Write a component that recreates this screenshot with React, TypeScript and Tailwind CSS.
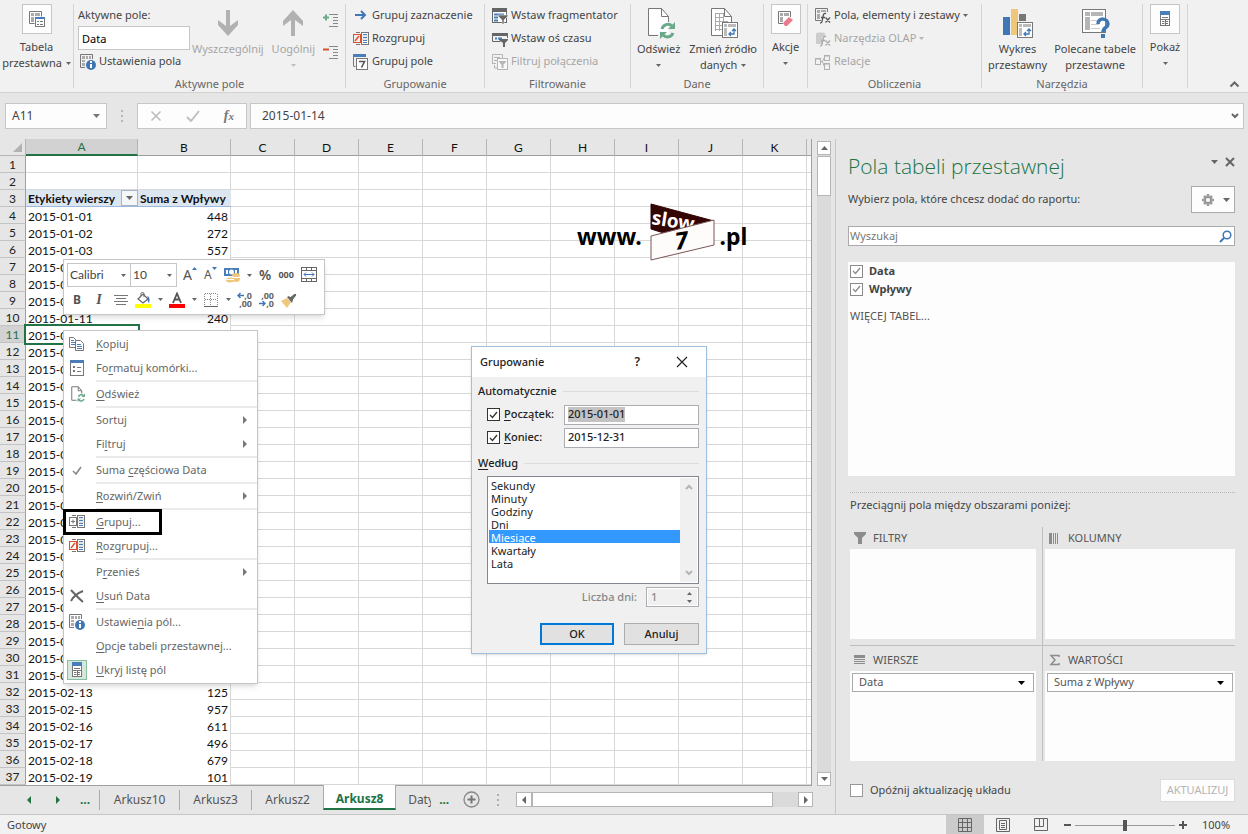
import type { ReactNode } from 'react';
import clsx from 'clsx';

const COLUMNS = ['A', 'B', 'C', 'D', 'E', 'F', 'G', 'H', 'I', 'J', 'K'];

const COL_WIDTHS: Record<string, string> = {
  A: 'w-[112px]',
  B: 'w-[93px]',
};

type PivotRow = { date: string; sum: number };

const PIVOT_ROWS: PivotRow[] = [
  { date: '2015-01-01', sum: 448 },
  { date: '2015-01-02', sum: 272 },
  { date: '2015-01-03', sum: 557 },
  { date: '2015-01-06', sum: 318 },
  { date: '2015-01-08', sum: 764 },
  { date: '2015-01-09', sum: 125 },
  { date: '2015-01-11', sum: 240 },
  { date: '2015-01-14', sum: 633 },
  { date: '2015-01-15', sum: 402 },
  { date: '2015-01-16', sum: 871 },
  { date: '2015-01-17', sum: 190 },
  { date: '2015-01-19', sum: 546 },
  { date: '2015-01-20', sum: 722 },
  { date: '2015-01-21', sum: 305 },
  { date: '2015-01-23', sum: 918 },
  { date: '2015-01-24', sum: 467 },
  { date: '2015-01-25', sum: 283 },
  { date: '2015-01-26', sum: 651 },
  { date: '2015-01-28', sum: 154 },
  { date: '2015-01-29', sum: 839 },
  { date: '2015-01-30', sum: 376 },
  { date: '2015-01-31', sum: 592 },
  { date: '2015-02-02', sum: 211 },
  { date: '2015-02-04', sum: 748 },
  { date: '2015-02-05', sum: 430 },
  { date: '2015-02-07', sum: 967 },
  { date: '2015-02-09', sum: 519 },
  { date: '2015-02-11', sum: 284 },
  { date: '2015-02-13', sum: 125 },
  { date: '2015-02-15', sum: 957 },
  { date: '2015-02-16', sum: 611 },
  { date: '2015-02-17', sum: 496 },
  { date: '2015-02-18', sum: 679 },
  { date: '2015-02-19', sum: 101 },
];

const ACTIVE_ROW = 11;

/* ---------- small shared glyphs ---------- */

function Caret({ className = 'text-[#666]' }: { className?: string }) {
  return (
    <svg viewBox="0 0 7 4" className={clsx('h-1 w-[7px] shrink-0', className)}>
      <path d="M0 0h7L3.500 4z" fill="currentColor" />
    </svg>
  );
}

function SmallCaret({ className = 'text-[#666]' }: { className?: string }) {
  return (
    <svg viewBox="0 0 5 3" className={clsx('h-[3px] w-[5px] shrink-0', className)}>
      <path d="M0 0h5L2.500 3z" fill="currentColor" />
    </svg>
  );
}

function Icon({ size = 16, children }: { size?: number; children: ReactNode }) {
  return (
    <svg width={size} height={size} viewBox={`0 0 ${size} ${size}`} fill="none" className="shrink-0">
      {children}
    </svg>
  );
}

function PivotIcon() {
  return (
    <Icon>
      <path d="M.5.5h12v5M.5.5v12h5" stroke="#777" />
      <path d="M2 2h3v3H2zM6 2h5v3H6zM2 6h3v5H2z" fill="#aaa" />
      <rect x="6.500" y="6.500" width="9" height="9" fill="#fff" stroke="#777" />
      <path d="M6 6h10v2H6z" fill="#4a7ebb" />
      <path d="M8 10.500h2M11 10.500h3M8 13.500h2M11 13.500h3" stroke="#777" />
    </Icon>
  );
}

function FieldSettingsIcon() {
  return (
    <Icon>
      <path d="M5 13.500H.5V.5h12V5" stroke="#777" />
      <path d="M2 2h3v3H2zM6 2h2v3H6zM9 2h2v3H9zM2 6h3v2H2zM2 9h3v3H2z" fill="#aaa" />
      <circle cx="11" cy="11" r="5" fill="#3f77b5" />
      <path d="M11 10v4" stroke="#fff" strokeWidth="2" />
      <path d="M10 7h2v2h-2z" fill="#fff" />
    </Icon>
  );
}

function GroupIcon({ crossed = false }: { crossed?: boolean }) {
  return (
    <Icon>
      <path d="M7 1.500H3M7 13.500H3" stroke="#777" />
      <rect x=".5" y="3.500" width="7" height="8" stroke={crossed ? '#d9512c' : '#777'} />
      {crossed ? (
        <path d="M2 10l4-5" stroke="#d9512c" strokeWidth="1.500" />
      ) : (
        <path d="M2 7.500h4M4 5.500v4" stroke="#777" />
      )}
      <rect x="8.500" y="1.500" width="7" height="12" fill="#fff" stroke="#777" />
      <path d="M10 3.500h4M10 6.500h4M10 9.500h4M10 11.500h4" stroke="#4a7ebb" />
      <path d="M9 5h6M9 8h6" stroke="#aaa" strokeWidth=".6" />
    </Icon>
  );
}

function CalendarIcon() {
  return (
    <Icon>
      <path d="M.5 12V1M.5 12.500h2" stroke="#777" />
      <path d="M0 0h13v3H0z" fill="#4a7ebb" />
      <rect x="3.500" y="4.500" width="11" height="11" fill="#fff" stroke="#777" />
      <path d="M6 7.500h5.500L8.500 13.500" stroke="#555" strokeWidth="1.600" />
    </Icon>
  );
}

function SlicerIcon() {
  return (
    <Icon>
      <rect x=".5" y=".5" width="14" height="14" fill="#fff" stroke="#666" />
      <path d="M0 0h15v4H0z" fill="#666" />
      <path d="M2 6.500h10M2 9.500h4M2 12.500h4" stroke="#4a7ebb" strokeWidth="2" />
      <path d="M6 7h10v1l-4 4v4h-2v-4L6 8z" fill="#666" stroke="#f1f1f1" strokeWidth=".6" />
    </Icon>
  );
}

function TimelineIcon() {
  return (
    <Icon>
      <path d="M.5 2v8.500h8M15.500 2v5" stroke="#666" />
      <path d="M0 2h16v3H0z" fill="#666" />
      <path d="M3 7.500h2M6 7.500h4" stroke="#4a7ebb" strokeWidth="2" />
      <path d="M7 8h9v1l-3 3v4h-2v-4L7 9z" fill="#666" />
    </Icon>
  );
}

function FilterConnectionsIcon() {
  return (
    <Icon>
      <path d="M.5 10V.5h10V4M2 3.500h6M2 6.500h3M.5 9.500H4M2.500 11v3H5" stroke="#b5b5b5" />
      <rect x="5.500" y="4.500" width="10" height="11" fill="#f8f8f8" stroke="#b5b5b5" />
      <path d="M7 7h7v1l-2.500 2.500V14h-2v-3.500L7 8z" fill="#b5b5b5" />
    </Icon>
  );
}

function RefreshPageIcon({ size = 32 }: { size?: number }) {
  return (
    <svg width={size} height={size} viewBox="0 0 32 32" fill="none" className="shrink-0">
      <path d="M5.500 1.500h12l8 8v18h-20z" fill="#fff" />
      <path d="M15 28.500H5.500v-27h13l7 8V15M18.500 1.500v8h7" stroke="#777" strokeWidth={size < 20 ? 2 : 1} />
      <path d="M19 22a6 6 0 0 1 10-3M30 26a6 6 0 0 1-10 2" stroke="#6aaa8b" strokeWidth="3" />
      <path d="M32 15v7h-7zM17 32v-7h7z" fill="#6aaa8b" />
    </svg>
  );
}

function ChangeSourceIcon() {
  return (
    <Icon size={32}>
      <path d="M4.500 1.500h13l7 8V28h-20z" fill="#fff" />
      <path d="M16 28.500H4.500v-27h13l7 8V15M17.500 1.500v8h7" stroke="#777" />
      <path d="M8 6.500h9M8 10.500h9M8 14.500h13M8 18.500h8M8 22.500h8M8.500 6v18M12.500 6v18M16.500 6v9" stroke="#aaa" />
      <rect x="15.500" y="15.500" width="15" height="15" fill="#fff" stroke="#777" />
      <path d="M17 17h3v3h-3zM21 17h8v3h-8zM17 21h3v8h-3z" fill="#bbb" />
      <path d="M22 27h5v-5M24 25l-2 2 2 2M25 24l2-2 2 2" stroke="#3f77b5" strokeWidth="1.300" />
    </Icon>
  );
}

function ClearIcon() {
  return (
    <Icon>
      <path d="M5 12.500H.5V.5h12V6" stroke="#777" />
      <path d="M2 2h3v3H2zM6 2h5v3H6zM2 6h3v5H2z" fill="#aaa" />
      <path d="M5 12l6-6 4 3-6 6H7z" fill="#ea7b8c" />
    </Icon>
  );
}

function FieldsItemsIcon() {
  return (
    <Icon>
      <path d="M6 12.500H.5V.5h12V4" stroke="#777" />
      <path d="M2 2h3v3H2zM6 2h5v2H6zM2 6h3v5H2z" fill="#aaa" />
      <path d="M5 15c2 0 2-1 2.500-4l.6-3c.4-2 1.200-3 3-2.500M6 9.500h4M10.500 9.500l4.500 5M15 9.500l-4.500 5" stroke="#555" strokeWidth="1.300" />
    </Icon>
  );
}

function OlapIcon() {
  return (
    <Icon>
      <path d="M1 2.500C1 1 10 1 10 2.500V6H7v7H1z" fill="#ccc" />
      <path d="M5 15c2 0 2-1 2.500-4l.6-3c.4-2 1.200-3 3-2.500M6 9.500h4M10.500 9.500l4.500 5M15 9.500l-4.500 5" stroke="#aaa" strokeWidth="1.300" />
    </Icon>
  );
}

function RelationsIcon() {
  return (
    <Icon>
      <rect x=".5" y="4.500" width="5" height="6" stroke="#b0b0b0" />
      <rect x="9.500" y="1.500" width="5" height="5" stroke="#b0b0b0" />
      <rect x="9.500" y="9.500" width="5" height="6" stroke="#b0b0b0" />
      <path d="M6 7.500h1.500L9 4M7.500 7.500L9 12M1 5h5M10 2h5M10 10h5" stroke="#b0b0b0" />
    </Icon>
  );
}

function PivotChartIcon() {
  return (
    <Icon size={32}>
      <path d="M1 10h7v18H1z" fill="#3f77b5" />
      <path d="M9 2h7v26H9z" fill="#efc77b" />
      <path d="M17 7h7v7h-7z" fill="#777" />
      <rect x="15.500" y="15.500" width="15" height="15" fill="#fff" stroke="#777" />
      <path d="M17 17h3v3h-3zM21 17h8v3h-8zM17 21h3v8h-3z" fill="#bbb" />
      <path d="M22 27h5v-5M24 25l-2 2 2 2M25 24l2-2 2 2" stroke="#3f77b5" strokeWidth="1.300" />
    </Icon>
  );
}

function RecommendedIcon() {
  return (
    <Icon size={32}>
      <rect x="3.500" y="2.500" width="23" height="23" fill="#fff" stroke="#777" />
      <path d="M6 5h5v4H6zM12 5h12v4H12zM6 10h5v13H6z" fill="#b5b5b5" />
      <path d="M12 13.500h10M12 17.500h8M12 21.500h9" stroke="#ccc" />
      <path d="M19 17c0-7 10-6 10 0 0 4-5 3-5 8" stroke="#3f77b5" strokeWidth="3.500" />
      <path d="M22 27h4v4h-4z" fill="#3f77b5" />
    </Icon>
  );
}

function FieldListIcon() {
  return (
    <Icon>
      <rect x="3.500" y=".5" width="9" height="14" fill="#fff" stroke="#777" />
      <path d="M3 0h10v4H3z" fill="#4a7ebb" />
      <path d="M5 6.500h6M4 8.500h8M5 10.500h2.500M9 10.500h2M5 12.500h2.500M9 12.500h2M8.500 8v6" stroke="#777" />
    </Icon>
  );
}

function BigArrow({ down = false }: { down?: boolean }) {
  return (
    <svg width="24" height="28" viewBox="0 0 24 28" className={down ? '' : 'rotate-180'}>
      <path d="M10 1h4v16l8-6v5L12 27 2 16v-5l8 6z" fill="#b1b1b1" />
    </svg>
  );
}

function ExpandIcon({ plus = false }: { plus?: boolean }) {
  return (
    <Icon>
      <path d="M6 2.500h9M10 5.500h5M10 8.500h5M10 11.500h5M6 14.500h9" stroke="#888" />
      {plus ? (
        <path d="M0 5.500h6M3 2.500v6" stroke="#6aaa8b" strokeWidth="2" />
      ) : (
        <path d="M0 5.500h6" stroke="#d9512c" strokeWidth="2" />
      )}
    </Icon>
  );
}

function ArrowRightIcon() {
  return (
    <Icon>
      <path d="M2 7h10M8 3l4 4-4 4" stroke="#3f77b5" strokeWidth="2" />
    </Icon>
  );
}

/* ---------- ribbon ---------- */

function RibbonGroup({ label, className, children }: { label?: string; className: string; children: ReactNode }) {
  return (
    <section className={clsx('flex flex-col border-r border-[#d5d5d5]', className)}>
      <div className="flex h-[69px]">{children}</div>
      <div className="mt-[3px] h-3 text-center leading-4 text-[#666]">{label}</div>
    </section>
  );
}

function SmallButton({ icon, label, caret, disabled }: { icon: ReactNode; label: string; caret?: boolean; disabled?: boolean }) {
  return (
    <button disabled={disabled} className="flex h-[23px] items-center gap-[3px] whitespace-nowrap disabled:text-[#a6a6a6]">
      {icon}
      {label}
      {caret && <SmallCaret className={disabled ? 'text-[#b5b5b5]' : 'text-[#666]'} />}
    </button>
  );
}

function BoxedButton({ icon, lines }: { icon: ReactNode; lines: string[] }) {
  const last = lines.length - 1;
  return (
    <button className="flex flex-1 flex-col items-center leading-4">
      <span className="mb-[5px] grid size-[30px] place-items-center border border-[#c6c6c6] bg-[#fdfdfd]">{icon}</span>
      {lines.map((line, i) => (
        <span key={i} className="flex h-4 items-center gap-1 whitespace-nowrap">
          {line}
          {i === last && <SmallCaret />}
        </span>
      ))}
    </button>
  );
}

function LargeButton({ icon, lines, caret, disabled }: { icon: ReactNode; lines: string[]; caret?: boolean; disabled?: boolean }) {
  const last = lines.length - 1;
  return (
    <button disabled={disabled} className="flex flex-col items-center leading-4 disabled:text-[#a6a6a6]">
      <span className="grid h-[37px] place-items-center">{icon}</span>
      {lines.map((line, i) => (
        <span key={i} className="flex h-4 items-center gap-1 whitespace-nowrap">
          {line}
          {caret && i === last && <SmallCaret className={disabled ? 'text-[#c0c0c0]' : 'text-[#666]'} />}
        </span>
      ))}
    </button>
  );
}

function Ribbon() {
  return (
    <header className="flex border-b border-[#d2d2d2] bg-[#f1f1f1] pt-1 pb-1 text-[#444]">
      <RibbonGroup className="w-[74px]">
        <BoxedButton icon={<PivotIcon />} lines={['Tabela', 'przestawna']} />
      </RibbonGroup>
      <RibbonGroup label="Aktywne pole" className="w-[272px]">
        <div className="ml-1 flex w-[112px] flex-col">
          <label htmlFor="active-field" className="flex h-[22px] items-center">Aktywne pole:</label>
          <input id="active-field" defaultValue="Data" className="h-6 w-full border border-[#c6c6c6] bg-white px-[3px] text-black outline-none" />
          <div className="pl-[2px]">
            <SmallButton icon={<FieldSettingsIcon />} label="Ustawienia pola" />
          </div>
        </div>
        <div className="flex flex-1 justify-between pr-[2px] pl-[2px]">
          <LargeButton icon={<BigArrow down />} lines={['Wyszczególnij']} disabled />
          <LargeButton icon={<BigArrow />} lines={['Uogólnij', '']} caret disabled />
          <div className="flex w-5 flex-col gap-4 pt-[8px]">
            <button aria-label="Rozwiń pole"><ExpandIcon plus /></button>
            <button aria-label="Zwiń pole"><ExpandIcon /></button>
          </div>
        </div>
      </RibbonGroup>
      <RibbonGroup label="Grupowanie" className="w-[139px]">
        <div className="pl-[7px]">
          <SmallButton icon={<ArrowRightIcon />} label="Grupuj zaznaczenie" />
          <SmallButton icon={<GroupIcon crossed />} label="Rozgrupuj" />
          <SmallButton icon={<CalendarIcon />} label="Grupuj pole" />
        </div>
      </RibbonGroup>
      <RibbonGroup label="Filtrowanie" className="w-[146px]">
        <div className="pl-[7px]">
          <SmallButton icon={<SlicerIcon />} label="Wstaw fragmentator" />
          <SmallButton icon={<TimelineIcon />} label="Wstaw oś czasu" />
          <SmallButton icon={<FilterConnectionsIcon />} label="Filtruj połączenia" disabled />
        </div>
      </RibbonGroup>
      <RibbonGroup label="Dane" className="w-[133px]">
        <div className="flex flex-1 justify-between pr-[6px] pl-[6px]">
          <LargeButton icon={<RefreshPageIcon />} lines={['Odśwież', '']} caret />
          <LargeButton icon={<ChangeSourceIcon />} lines={['Zmień źródło', 'danych']} caret />
        </div>
      </RibbonGroup>
      <RibbonGroup className="w-[44px]">
        <BoxedButton icon={<ClearIcon />} lines={['Akcje', '']} />
      </RibbonGroup>
      <RibbonGroup label="Obliczenia" className="w-[174px]">
        <div className="pl-[7px]">
          <SmallButton icon={<FieldsItemsIcon />} label="Pola, elementy i zestawy" caret />
          <SmallButton icon={<OlapIcon />} label="Narzędzia OLAP" caret disabled />
          <SmallButton icon={<RelationsIcon />} label="Relacje" disabled />
        </div>
      </RibbonGroup>
      <RibbonGroup label="Narzędzia" className="w-[161px]">
        <div className="flex flex-1 justify-between px-[6px]">
          <LargeButton icon={<PivotChartIcon />} lines={['Wykres', 'przestawny']} />
          <LargeButton icon={<RecommendedIcon />} lines={['Polecane tabele', 'przestawne']} />
        </div>
      </RibbonGroup>
      <RibbonGroup className="w-[45px]">
        <BoxedButton icon={<FieldListIcon />} lines={['Pokaż', '']} />
      </RibbonGroup>
      <button aria-label="Zwiń wstążkę" className="mr-2 ml-auto self-end">
        <svg width="11" height="7" viewBox="0 0 11 7" fill="none">
          <path d="M1.500 5.500l4-4 4 4" stroke="#666" strokeWidth="2" />
        </svg>
      </button>
    </header>
  );
}

function FormulaBar() {
  return (
    <div className="flex h-[46px] items-center bg-[#e6e6e6] pr-1 pl-[5px]">
      <div className="flex h-[26px] w-[102px] items-center border border-[#c6c6c6] bg-[#fdfdfd] pr-[6px]">
        <input aria-label="Pole nazwy" defaultValue="A11" className="w-0 flex-1 pl-[6px] text-xs text-[#444] outline-none" />
        <Caret className="text-[#777]" />
      </div>
      <div className="flex w-[30px] flex-col items-center gap-[3px]">
        {[0, 1, 2].map((i) => <i key={i} className="size-[2px] bg-[#b8b8b8]" />)}
      </div>
      <div className="mr-[3px] flex h-[26px] w-[110px] items-center justify-between border border-[#c6c6c6] bg-[#fdfdfd] px-3">
        <button aria-label="Anuluj wpis">
          <svg width="12" height="12" viewBox="0 0 12 12"><path d="M1.500 1.500l9 9M10.500 1.500l-9 9" stroke="#bbb" strokeWidth="1.500" /></svg>
        </button>
        <button aria-label="Zatwierdź wpis">
          <svg width="14" height="12" viewBox="0 0 14 12" fill="none"><path d="M1 7l4 4 8-10" stroke="#c0c0c0" strokeWidth="2" /></svg>
        </button>
        <button className="font-[Liberation_Serif,serif] text-sm font-bold text-[#777] italic">
          f<span className="text-[11px]">x</span>
        </button>
      </div>
      <div className="flex h-[26px] flex-1 items-center border border-[#c6c6c6] bg-[#fdfdfd] pr-1">
        <input aria-label="Pasek formuły" defaultValue="2015-01-14" className="flex-1 pl-[11px] text-xs text-[#444] outline-none" />
        <svg width="8" height="6" viewBox="0 0 8 6" fill="none"><path d="M1 1l3 3 3-3" stroke="#666" strokeWidth="2" /></svg>
      </div>
    </div>
  );
}

/* ---------- worksheet ---------- */

function RowHeader({ row }: { row: number }) {
  return (
    <th
      className={clsx(
        'border-r border-b border-r-[#9f9f9f] border-b-[#c3c3c3] p-0 pt-px text-center font-normal',
        row === ACTIVE_ROW ? 'bg-[#d2d2d2] text-[#217346]' : 'bg-[#e6e6e6] text-[#222]',
      )}
    >
      {row}
    </th>
  );
}

function EmptyCells({ from }: { from: number }) {
  return (
    <>
      {COLUMNS.slice(from).map((c) => (
        <td key={c} className="border-r border-b border-[#d8d8d8] p-0" />
      ))}
      <td className="border-b border-[#d8d8d8] p-0" />
    </>
  );
}

function Grid() {
  return (
    <table className="w-full table-fixed border-separate border-spacing-0 border-r border-b border-[#9f9f9f] bg-white font-[Lato,sans-serif] text-xs leading-[15px] text-[#111]">
      <colgroup>
        <col className="w-[26px]" />
        {COLUMNS.map((c) => <col key={c} className={COL_WIDTHS[c] ?? 'w-[64px]'} />)}
        <col />
      </colgroup>
      <thead>
        <tr className="h-[17px] bg-[#e6e6e6]">
          <th className="border-r border-b border-[#b5b5b5] p-0">
            <svg width="9" height="9" viewBox="0 0 9 9" className="mr-[3px] ml-auto"><path d="M9 0v9H0z" fill="#b2b2b2" /></svg>
          </th>
          {COLUMNS.map((c) => (
            <th
              key={c}
              className={clsx(
                'border-r border-r-[#b5b5b5] p-0 font-normal',
                c === 'A' ? 'border-b-2 border-b-[#217346] bg-[#d2d2d2] text-[#217346]' : 'border-b border-b-[#9f9f9f] pt-px',
              )}
            >
              {c}
            </th>
          ))}
          <th className="border-b border-[#9f9f9f] p-0" />
        </tr>
      </thead>
      <tbody>
        {[1, 2].map((row) => (
          <tr key={row} className="h-[17px]">
            <RowHeader row={row} />
            <EmptyCells from={0} />
          </tr>
        ))}
        <tr className="h-[17px]">
          <RowHeader row={3} />
          <td className="border-b border-[#9bb9dc] bg-[#dce6f1] p-0 font-bold">
            <div className="flex h-4 items-center justify-between pl-[2px] whitespace-nowrap">
              <span className="pt-px">Etykiety wierszy</span>
              <button aria-label="Filtruj etykiety" className="grid h-4 w-[17px] place-items-center border border-[#a9b4c2] bg-[#f4f6f9]">
                <Caret />
              </button>
            </div>
          </td>
          <td className="border-b border-[#9bb9dc] bg-[#dce6f1] p-0 pt-px pl-[2px] font-bold whitespace-nowrap">Suma z Wpływy</td>
          <EmptyCells from={2} />
        </tr>
        {PIVOT_ROWS.map((r, i) => {
          const row = i + 4;
          return (
            <tr key={r.date} className="h-[17px]">
              <RowHeader row={row} />
              <td className={clsx('p-0 pt-px pl-[2px]', row === ACTIVE_ROW && 'outline-2 outline-[#217346]')}>{r.date}</td>
              <td className="border-r border-[#d8d8d8] p-0 pt-px pr-[2px] text-right">{r.sum}</td>
              <EmptyCells from={2} />
            </tr>
          );
        })}
      </tbody>
    </table>
  );
}

function VerticalScrollbar() {
  return (
    <div className="mt-[2px] mr-1 ml-[5px] flex w-[14px] shrink-0 flex-col bg-[#dadada]">
      <button aria-label="W górę" className="grid h-[14px] place-items-center border border-[#b5b5b5] bg-white">
        <Caret className="rotate-180 text-[#666]" />
      </button>
      <div className="mt-px h-10 border border-[#b5b5b5] bg-white" />
      <button aria-label="W dół" className="mt-auto grid h-[14px] place-items-center border border-[#b5b5b5] bg-white">
        <Caret />
      </button>
    </div>
  );
}

function SiteLogo() {
  return (
    <div className="absolute top-[63px] left-[577px] flex items-center text-[23px] leading-none font-bold text-black">
      <span className="pt-[6px]">www.</span>
      <svg width="66" height="62" viewBox="0 0 66 62" className="mr-1 ml-2">
        <path d="M1 2l63 17-47 13L1 27z" fill="#330505" stroke="#330505" />
        <text x="1" y="22" transform="rotate(9 1 22)" fontSize="19" fill="#fff" className="font-bold">slow</text>
        <path d="M1 34l63-16v25L1 58z" fill="#fefbfb" stroke="#7a5555" />
        <text x="26" y="48" transform="rotate(-8 26 48)" fontSize="24" fill="#000" className="font-bold italic">7</text>
      </svg>
      <span className="pt-[6px]">.pl</span>
    </div>
  );
}

/* ---------- mini toolbar ---------- */

function BorderedSelect({ label, value, className }: { label: string; value: string; className: string }) {
  return (
    <div className={clsx('flex h-6 items-center border border-[#c6c6c6] bg-white pr-1', className)}>
      <select aria-label={label} className="w-0 flex-1 appearance-none pl-[2px] font-[Lato,sans-serif] text-xs text-[#444] outline-none">
        <option>{value}</option>
      </select>
      <SmallCaret />
    </div>
  );
}

function DecimalsButton({ label, top, bottom, arrow }: { label: string; top: string; bottom: string; arrow: 'left' | 'right' }) {
  return (
    <button aria-label={label}>
      <svg width="16" height="16" viewBox="0 0 16 16" fill="none" className="text-[9px] font-bold">
        <text x="15" y="7" textAnchor="end" fill="#666">{top}</text>
        <text x="15" y="15" textAnchor="end" fill="#666">{bottom}</text>
        {arrow === 'left' ? (
          <path d="M1 3.500h6M3.500 1L1 3.500 3.500 6" stroke="#3f77b5" strokeWidth="1.400" />
        ) : (
          <path d="M0 11.500h6M3.500 9L6 11.500 3.500 14" stroke="#3f77b5" strokeWidth="1.400" />
        )}
      </svg>
    </button>
  );
}

function MiniToolbar() {
  return (
    <div className="absolute top-[120px] left-[63px] h-[56px] w-[262px] border border-[#c6c6c6] bg-white px-[3px] pt-[3px] text-[#555] shadow-md">
      <div className="flex h-6 items-center">
        <BorderedSelect label="Czcionka" value="Calibri" className="w-[64px]" />
        <BorderedSelect label="Rozmiar czcionki" value="10" className="-ml-px w-[47px]" />
        <div className="flex flex-1 items-center justify-between pr-1 pl-[6px]">
          <button className="flex items-start text-sm leading-4">A<SmallCaret className="rotate-180 text-[#3f77b5]" /></button>
          <button className="flex items-start text-xs leading-4">A<SmallCaret className="text-[#3f77b5]" /></button>
          <button aria-label="Format liczb księgowych" className="flex items-center gap-[7px]">
            <Icon>
              <path d="M0 1h15v8H0z" fill="#4a7ebb" />
              <path d="M2 3h2v4H2zM11 3h2v4h-2z" fill="#fff" />
              <circle cx="7.500" cy="5" r="2.500" fill="#fff" />
              <ellipse cx="12" cy="8" rx="4" ry="2" fill="#efc77b" />
              <ellipse cx="12" cy="12" rx="4" ry="3" fill="#efc77b" />
              <ellipse cx="6" cy="13" rx="4" ry="2.500" fill="#efc77b" />
              <path d="M8 10.500h8M2 12.500h8" stroke="#fff" />
            </Icon>
            <SmallCaret />
          </button>
          <button className="text-sm leading-4 font-semibold">%</button>
          <button className="text-[9px] leading-4 font-bold">000</button>
          <button aria-label="Scal i wyśrodkuj">
            <Icon>
              <rect x=".5" y=".5" width="15" height="14" stroke="#666" />
              <path d="M1 3.500h14M1 11.500h14M5.500 1v2.500M10.500 1v2.500M5.500 12v3M10.500 12v3" stroke="#666" />
              <path d="M3 7.500h10M5 5.500l-2 2 2 2M11 5.500l2 2-2 2" stroke="#3f77b5" />
            </Icon>
          </button>
        </div>
      </div>
      <div className="flex h-[25px] items-center gap-[6px] pl-[2px]">
        <button className="w-4 text-xs font-bold">B</button>
        <button className="w-4 font-[Liberation_Serif,serif] text-sm font-bold italic">I</button>
        <button aria-label="Wyśrodkuj">
          <Icon><path d="M1 3.500h14M3 6.500h10M1 9.500h14M3 12.500h10" stroke="#777" /></Icon>
        </button>
        <button aria-label="Kolor wypełnienia" className="flex items-center gap-[7px]">
          <Icon>
            <path d="M3 7l5-5 5 5-5 4z" fill="#fff" stroke="#666" strokeWidth="1.200" />
            <path d="M6 4V1.500C6 0 9 0 9 1.500V5" stroke="#666" />
            <path d="M12 4c3 1 3 4 2 7-1-1-2-3-1-5z" fill="#3f77b5" />
            <path d="M0 12h16v4H0z" fill="#ff0" />
          </Icon>
          <SmallCaret />
        </button>
        <button aria-label="Kolor czcionki" className="flex items-center gap-[7px]">
          <Icon>
            <path d="M4 11L8 1.500 12 11M5 7.500h6" stroke="#555" strokeWidth="1.800" />
            <path d="M0 12h16v4H0z" fill="#f00" />
          </Icon>
          <SmallCaret />
        </button>
        <button aria-label="Obramowanie" className="flex items-center gap-[7px]">
          <Icon>
            <path d="M1.500 2v12M14.500 2v12M7.500 2v12M2 1.500h12M2 7.500h12" stroke="#888" strokeDasharray="1 1" />
            <path d="M1 14.500h14" stroke="#666" />
          </Icon>
          <SmallCaret />
        </button>
        <DecimalsButton label="Zwiększ dziesiętne" top=",0" bottom=",00" arrow="left" />
        <DecimalsButton label="Zmniejsz dziesiętne" top=",00" bottom=",0" arrow="right" />
        <button aria-label="Malarz formatów">
          <Icon>
            <path d="M0 9l6-3 4 4-4 6z" fill="#efc77b" />
            <path d="M6 5l2-1 4 4-1 3z" fill="#666" />
            <path d="M9 6l5-4 1 1-4 5z" fill="#666" stroke="#666" />
          </Icon>
        </button>
      </div>
    </div>
  );
}

/* ---------- context menu ---------- */

type MenuEntry = {
  /* the letter between underscores is the access key */
  label: string;
  icon?: ReactNode;
  submenu?: boolean;
  separated?: boolean;
  framed?: boolean;
  checked?: boolean;
};

const MENU: MenuEntry[] = [
  {
    label: '_K_opiuj',
    icon: (
      <Icon>
        <path d="M.5 1.500h4l3 3v7h-7z" fill="#fff" stroke="#777" />
        <path d="M2 4.500h3M2 6.500h4M2 8.500h4" stroke="#4a7ebb" />
        <path d="M6.500 4.500h5l3 3v7h-8z" fill="#fff" stroke="#777" />
        <path d="M8 8.500h4M8 10.500h5M8 12.500h5" stroke="#4a7ebb" />
      </Icon>
    ),
  },
  {
    label: 'Fo_r_matuj komórki...',
    icon: (
      <Icon>
        <rect x="1.500" y=".5" width="13" height="15" fill="#fff" stroke="#777" />
        <path d="M1 0h14v3H1z" fill="#4a7ebb" />
        <path d="M4 6h2v2H4zM4 10h2v2H4z" fill="#777" />
        <path d="M8 7.500h4M8 11.500h4" stroke="#777" />
      </Icon>
    ),
  },
  { label: '_O_dśwież', icon: <RefreshPageIcon size={16} />, separated: true },
  { label: 'Sortuj', submenu: true, separated: true },
  { label: 'Fi_l_truj', submenu: true },
  {
    label: 'Suma _c_zęściowa Data',
    separated: true,
    icon: <Icon><path d="M4 9l3 3 5-7" stroke="#888" strokeWidth="1.600" /></Icon>,
  },
  { label: '_R_ozwiń/Zwiń', submenu: true, separated: true },
  { label: '_G_rupuj...', icon: <GroupIcon />, separated: true, framed: true },
  { label: '_R_ozgrupuj...', icon: <GroupIcon crossed /> },
  { label: 'P_r_zenieś', submenu: true, separated: true },
  {
    label: '_U_suń Data',
    icon: <Icon><path d="M2 2c3 3 6 7 12 12M14 3C9 5 4 9 2 13" stroke="#666" strokeWidth="2" /></Icon>,
  },
  { label: 'Ustawie_n_ia pól...', icon: <FieldSettingsIcon />, separated: true },
  { label: '_O_pcje tabeli przestawnej...' },
  { label: '_U_kryj listę pól', icon: <FieldListIcon />, checked: true },
];

function AccessLabel({ text }: { text: string }) {
  const parts = text.split('_');
  return (
    <span>
      {parts.map((p, i) => (i % 2 === 1 ? <u key={i} className="underline-offset-2">{p}</u> : p))}
    </span>
  );
}

function ContextMenu() {
  return (
    <ul className="absolute top-[191px] left-[63px] w-[195px] border border-[#c6c6c6] bg-white py-px text-[#666] shadow-md">
      {MENU.map((m) => (
        <li key={m.label}>
          {m.separated && <div className="ml-8 border-t-2 border-[#ebebeb]" />}
          <button className="relative flex h-6 w-full items-center pr-[10px] pl-[3px] text-left">
            <span className={clsx('mr-[9px] grid size-5 place-items-center', m.checked && 'border border-[#86bfa0] bg-[#d6e8dd]')}>{m.icon}</span>
            <AccessLabel text={m.label} />
            {m.submenu && (
              <svg width="4" height="8" viewBox="0 0 4 8" className="ml-auto"><path d="M0 0l4 4-4 4z" fill="#777" /></svg>
            )}
            {m.framed && <span className="absolute -top-px -left-px h-[26px] w-[99px] border-3 border-black" />}
          </button>
        </li>
      ))}
    </ul>
  );
}

/* ---------- grouping dialog ---------- */

function Checkbox({ id, checked, tone }: { id: string; checked?: boolean; tone: string }) {
  return (
    <span className={clsx('grid size-[13px] shrink-0 place-items-center', tone)}>
      <input id={id} type="checkbox" defaultChecked={checked} className="peer size-[13px] appearance-none border border-current bg-white [grid-area:1/1]" />
      <svg viewBox="0 0 9 8" fill="none" className="pointer-events-none hidden h-2 w-[9px] [grid-area:1/1] peer-checked:block">
        <path d="M1 4l2.500 2.500L8 1" stroke="currentColor" strokeWidth="1.300" />
      </svg>
    </span>
  );
}

function DateField({ id, label, value, selected }: { id: string; label: string; value: string; selected?: boolean }) {
  return (
    <div className="flex h-[23px] items-center pl-[9px]">
      <Checkbox id={`${id}-auto`} checked tone="text-[#333]" />
      <label htmlFor={`${id}-auto`} className="w-[64px] pl-[4px]"><AccessLabel text={label} /></label>
      <div className="flex h-5 flex-1 items-center border border-[#abadb3] bg-white px-[3px]">
        <input
          id={id}
          aria-label={label.replaceAll('_', '')}
          defaultValue={value}
          size={10}
          className={clsx('h-[15px] outline-none field-sizing-content', selected && 'bg-[#c3c3c3]')}
        />
      </div>
    </div>
  );
}

function Legend({ children }: { children: ReactNode }) {
  return (
    <div className="flex h-4 items-center gap-[6px]">
      {children}
      <span className="flex-1 border-t border-[#dcdcdc]" />
    </div>
  );
}

const UNITS = ['Sekundy', 'Minuty', 'Godziny', 'Dni', 'Miesiące', 'Kwartały', 'Lata'];

function GroupingDialog() {
  return (
    <div role="dialog" className="absolute top-[207px] left-[471px] w-[236px] border border-[#9fbfdf] bg-[#f0f0f0] font-medium text-[#222] shadow-sm">
      <div className="flex h-[30px] items-center bg-white pr-[18px] pl-2">
        Grupowanie
        <button className="ml-auto px-[6px] text-xs font-semibold">?</button>
        <button aria-label="Zamknij" className="ml-[30px]">
          <svg width="12" height="12" viewBox="0 0 12 12"><path d="M1 1l10 10M11 1L1 11" stroke="#222" strokeWidth="1.200" /></svg>
        </button>
      </div>
      <div className="pt-[6px] pr-[7px] pb-2 pl-[6px]">
        <Legend>Automatycznie</Legend>
        <div className="mt-1 mb-[6px]">
          <DateField id="group-start" label="_P_oczątek:" value="2015-01-01" selected />
          <DateField id="group-end" label="_K_oniec:" value="2015-12-31" />
        </div>
        <Legend><label htmlFor="group-unit"><AccessLabel text="_W_edług" /></label></Legend>
        <div className="mt-[5px] ml-[9px] flex h-[108px] border border-[#828790] bg-white p-px">
          <select
            id="group-unit"
            size={8}
            defaultValue="Miesiące"
            className="h-full flex-1 appearance-none overflow-hidden outline-none"
          >
            {UNITS.map((u) => (
              <option
                key={u}
                value={u}
                className="h-[13px] min-h-0 px-[2px] py-0 leading-[13px] checked:bg-[linear-gradient(#3399ff,#3399ff)] checked:[-webkit-text-fill-color:white]"
              >
                {u}
              </option>
            ))}
          </select>
          <div className="flex w-[17px] flex-col items-center justify-between bg-[#f0f0f0] py-[6px]">
            <svg width="8" height="6" viewBox="0 0 8 6" fill="none"><path d="M1 5l3-3 3 3" stroke="#b5b5b5" strokeWidth="2" /></svg>
            <svg width="8" height="6" viewBox="0 0 8 6" fill="none"><path d="M1 1l3 3 3-3" stroke="#b5b5b5" strokeWidth="2" /></svg>
          </div>
        </div>
        <div className="mt-[3px] flex items-center justify-end gap-[9px] text-[#888]">
          <label htmlFor="group-days">Liczba dni:</label>
          <div className="flex h-5 w-[53px] border border-[#abadb3] bg-white p-px">
            <input id="group-days" disabled defaultValue="1" className="w-0 flex-1 bg-[#f0f0f0] pl-[3px]" />
            <div className="flex w-4 flex-col items-center justify-around bg-[#f0f0f0]">
              <SmallCaret className="rotate-180 text-[#666]" />
              <SmallCaret />
            </div>
          </div>
        </div>
        <div className="mt-4 flex justify-end gap-[10px]">
          <button className="h-[22px] w-[74px] border-2 border-[#0078d7] bg-[#e1e1e1]">OK</button>
          <button className="h-[22px] w-[75px] border border-[#adadad] bg-[#e1e1e1]">Anuluj</button>
        </div>
      </div>
    </div>
  );
}

/* ---------- sheet tabs ---------- */

function TabArrow({ left = false, green = false }: { left?: boolean; green?: boolean }) {
  return (
    <svg width="4" height="8" viewBox="0 0 4 8" className={left ? 'rotate-180' : ''}>
      <path d="M0 0l4 4-4 4z" fill={green ? '#217346' : '#666'} />
    </svg>
  );
}

function SheetTabs() {
  return (
    <div className="flex h-[28px] items-center pr-[22px] pb-px text-[#555]">
      <button aria-label="Poprzedni arkusz" className="ml-[27px]"><TabArrow left green /></button>
      <button aria-label="Następny arkusz" className="ml-[25px]"><TabArrow green /></button>
      <button className="ml-5 text-xs font-bold text-[#217346]">...</button>
      <nav className="ml-[9px] flex items-center self-stretch text-xs">
        <button className="h-5 w-20 border-l border-[#ababab]">Arkusz10</button>
        <button className="h-5 w-[72px] border-l border-[#ababab]">Arkusz3</button>
        <button className="h-5 w-[72px] border-l border-[#ababab]">Arkusz2</button>
        <button className="-mt-px h-[25px] w-[73px] self-start border-x border-b-2 border-x-[#ababab] border-b-[#217346] bg-white pt-1 font-bold text-[#217346]">Arkusz8</button>
        <button className="ml-3 w-[23px] overflow-hidden text-left">Daty</button>
      </nav>
      <button className="ml-2 text-xs font-bold text-[#217346]">...</button>
      <button aria-label="Nowy arkusz" className="ml-[14px]">
        <svg width="17" height="17" viewBox="0 0 17 17" fill="none">
          <circle cx="8.500" cy="8.500" r="7.500" stroke="#888" strokeWidth="1.300" />
          <path d="M4.500 8.500h8M8.500 4.500v8" stroke="#777" strokeWidth="2" />
        </svg>
      </button>
      <div className="mx-auto flex flex-col gap-[3px]">
        {[0, 1, 2].map((i) => <i key={i} className="size-[2px] bg-[#b0b0b0]" />)}
      </div>
      <div className="flex h-[15px] w-[297px] bg-[#dadada]">
        <button aria-label="W lewo" className="grid w-4 place-items-center border border-[#b5b5b5] bg-white"><TabArrow left /></button>
        <div className="w-[241px] border border-[#b5b5b5] bg-white" />
        <button aria-label="W prawo" className="ml-auto grid w-[15px] place-items-center border border-[#b5b5b5] bg-white"><TabArrow /></button>
      </div>
    </div>
  );
}

/* ---------- field pane ---------- */

function AreaBox({ icon, title, field }: { icon: ReactNode; title: string; field?: string }) {
  return (
    <section>
      <h3 className="flex h-[22px] items-center gap-[7px] pl-1 text-[#555]">{icon}{title}</h3>
      <div className="h-[90px] bg-[#fdfdfd] p-[2px]">
        {field && (
          <button className="flex h-[19px] w-full items-center justify-between border border-[#ababab] bg-white pr-2 pl-[6px] text-[#555]">
            {field}
            <Caret className="text-black" />
          </button>
        )}
      </div>
    </section>
  );
}

function FieldPane() {
  return (
    <aside className="flex w-[413px] shrink-0 flex-col border-l border-[#c6c6c6] pr-[13px] pl-3 text-[#444]">
      <div className="flex items-center pt-3">
        <h2 className="flex-1 font-['Open_Sans',sans-serif] text-[21px] leading-[30px] font-light text-[#217346]">Pola tabeli przestawnej</h2>
        <button aria-label="Opcje okienka" className="mr-[7px] mb-2"><Caret /></button>
        <button aria-label="Zamknij okienko" className="mb-2">
          <svg width="10" height="10" viewBox="0 0 10 10"><path d="M1 1l8 8M9 1L1 9" stroke="#666" strokeWidth="2" /></svg>
        </button>
      </div>
      <div className="mt-[5px] flex items-center justify-between">
        <p>Wybierz pola, które chcesz dodać do raportu:</p>
        <button aria-label="Narzędzia" className="flex h-[27px] w-11 items-center justify-between border border-[#ababab] bg-[#fdfdfd] pr-1 pl-[9px]">
          <svg width="14" height="14" viewBox="0 0 14 14" fill="none">
            <path d="M7 1v12M1 7h12M3 3l8 8M11 3l-8 8" stroke="#999" strokeWidth="2.500" />
            <circle cx="7" cy="7" r="3" fill="#fdfdfd" stroke="#999" strokeWidth="2" />
          </svg>
          <Caret />
        </button>
      </div>
      <div className="mt-[13px] flex h-5 items-center border border-[#ababab] bg-white pr-[2px]">
        <input type="search" aria-label="Wyszukaj" placeholder="Wyszukaj" className="flex-1 pl-px outline-none placeholder:text-[#777]" />
        <svg width="13" height="13" viewBox="0 0 13 13" fill="none">
          <circle cx="8" cy="5" r="3.800" stroke="#3f77b5" strokeWidth="1.500" />
          <path d="M5 8l-4 4" stroke="#3f77b5" strokeWidth="2" />
        </svg>
      </div>
      <div className="mt-4 h-[214px] bg-[#fdfdfd] pl-[2px]">
        {['Data', 'Wpływy'].map((f) => (
          <div key={f} className="flex h-[18px] items-center gap-[6px] font-bold">
            <Checkbox id={`field-${f}`} checked tone="text-[#8a8a8a]" />
            <label htmlFor={`field-${f}`}>{f}</label>
          </div>
        ))}
        <a href="#" className="mt-[10px] block leading-4 text-[#555]">WIĘCEJ TABEL...</a>
      </div>
      <div className="mt-4 ml-[2px] border-t border-dotted border-[#b5b5b5]" />
      <p className="mt-1 pl-[2px] leading-4">Przeciągnij pola między obszarami poniżej:</p>
      <div className="mt-[14px] ml-[2px] grid grid-cols-[193px_1fr]">
        <div className="border-r border-b border-[#bfbfbf] pr-[6px] pb-[6px]">
          <AreaBox
            title="FILTRY"
            icon={<svg width="12" height="12" viewBox="0 0 12 12"><path d="M0 0h12v2L8 6v6H4V6L0 2z" fill="#8c8c8c" /></svg>}
          />
        </div>
        <div className="border-b border-[#bfbfbf] pb-[6px] pl-[2px]">
          <AreaBox
            title="KOLUMNY"
            icon={<svg width="12" height="12" viewBox="0 0 12 12"><path d="M0 1h3v11H0zM4 1h1v11H4zM6 1h1v11H6zM8 1h1v11H8z" fill="#8c8c8c" /></svg>}
          />
        </div>
        <div className="border-r border-[#bfbfbf] pt-[3px] pr-[6px]">
          <AreaBox
            title="WIERSZE"
            field="Data"
            icon={<svg width="12" height="12" viewBox="0 0 12 12"><path d="M0 1h11v3H0zM0 5h11v1H0zM0 7h11v1H0zM0 9h11v1H0z" fill="#8c8c8c" /></svg>}
          />
        </div>
        <div className="pt-[3px] pl-[2px]">
          <AreaBox
            title="WARTOŚCI"
            field="Suma z Wpływy"
            icon={<svg width="12" height="12" viewBox="0 0 12 12" fill="none"><path d="M10 3V1.500H2L6 6l-4 4.500h8V9" stroke="#8c8c8c" strokeWidth="1.500" /></svg>}
          />
        </div>
      </div>
      <div className="mt-[18px] flex items-center">
        <span className="ml-[2px]"><Checkbox id="defer" tone="text-[#999]" /></span>
        <label htmlFor="defer" className="ml-[7px]">Opóźnij aktualizację układu</label>
        <button disabled className="ml-auto h-[23px] w-[75px] border border-[#dcdcdc] bg-[#fdfdfd] text-[#b5b5b5]">AKTUALIZUJ</button>
      </div>
    </aside>
  );
}

/* ---------- status bar ---------- */

function StatusBar() {
  return (
    <footer className="flex h-[21px] items-center border-t border-[#c6c6c6] bg-[#f1f1f1] pl-[7px] text-[#444]">
      Gotowy
      <div className="ml-auto flex h-full items-center">
        <button aria-label="Normalny" className="grid h-full w-[38px] place-items-center bg-[#cbcbcb]">
          <Icon size={14}><path d="M.5.5h13v13H.5zM.5 4.500h13M.5 9.500h13M4.500.5v13M9.500.5v13" stroke="#666" /></Icon>
        </button>
        <button aria-label="Układ strony" className="grid h-full w-[38px] place-items-center">
          <Icon size={14}><path d="M.5.5h13v13H.5zM3.500 2.500h7v9h-7zM5 5.500h4M5 7.500h4M5 9.500h4" stroke="#666" /></Icon>
        </button>
        <button aria-label="Podgląd podziału stron" className="grid h-full w-[38px] place-items-center">
          <Icon size={14}><path d="M.5.5h13v12H.5zM.5 8.500h9V.5M5.500.5v8" stroke="#666" /></Icon>
        </button>
        <button aria-label="Pomniejsz" className="ml-1 h-[2px] w-[7px] bg-[#555]" />
        <input
          type="range"
          aria-label="Powiększenie"
          defaultValue={50}
          className="mx-1 h-[14px] w-[100px] appearance-none bg-[linear-gradient(#9a9a9a,#9a9a9a)] bg-[length:100%_1px] bg-center bg-no-repeat [&::-webkit-slider-thumb]:h-[11px] [&::-webkit-slider-thumb]:w-1 [&::-webkit-slider-thumb]:appearance-none [&::-webkit-slider-thumb]:bg-[#555]"
        />
        <button aria-label="Powiększ">
          <svg width="8" height="8" viewBox="0 0 8 8"><path d="M0 4h8M4 0v8" stroke="#555" strokeWidth="2" /></svg>
        </button>
        <span className="w-[61px] pl-[15px]">100%</span>
      </div>
    </footer>
  );
}

export default function App() {
  return (
    <div className="flex min-h-screen flex-col bg-[#e6e6e6] font-['Noto_Sans','Open_Sans',sans-serif] text-[11px]">
      <Ribbon />
      <FormulaBar />
      <main className="flex flex-1">
        <div className="relative flex min-w-0 flex-1 flex-col">
          <div className="flex">
            <div className="min-w-0 flex-1"><Grid /></div>
            <VerticalScrollbar />
          </div>
          <SheetTabs />
          <SiteLogo />
          <MiniToolbar />
          <ContextMenu />
          <GroupingDialog />
        </div>
        <FieldPane />
      </main>
      <StatusBar />
    </div>
  );
}
